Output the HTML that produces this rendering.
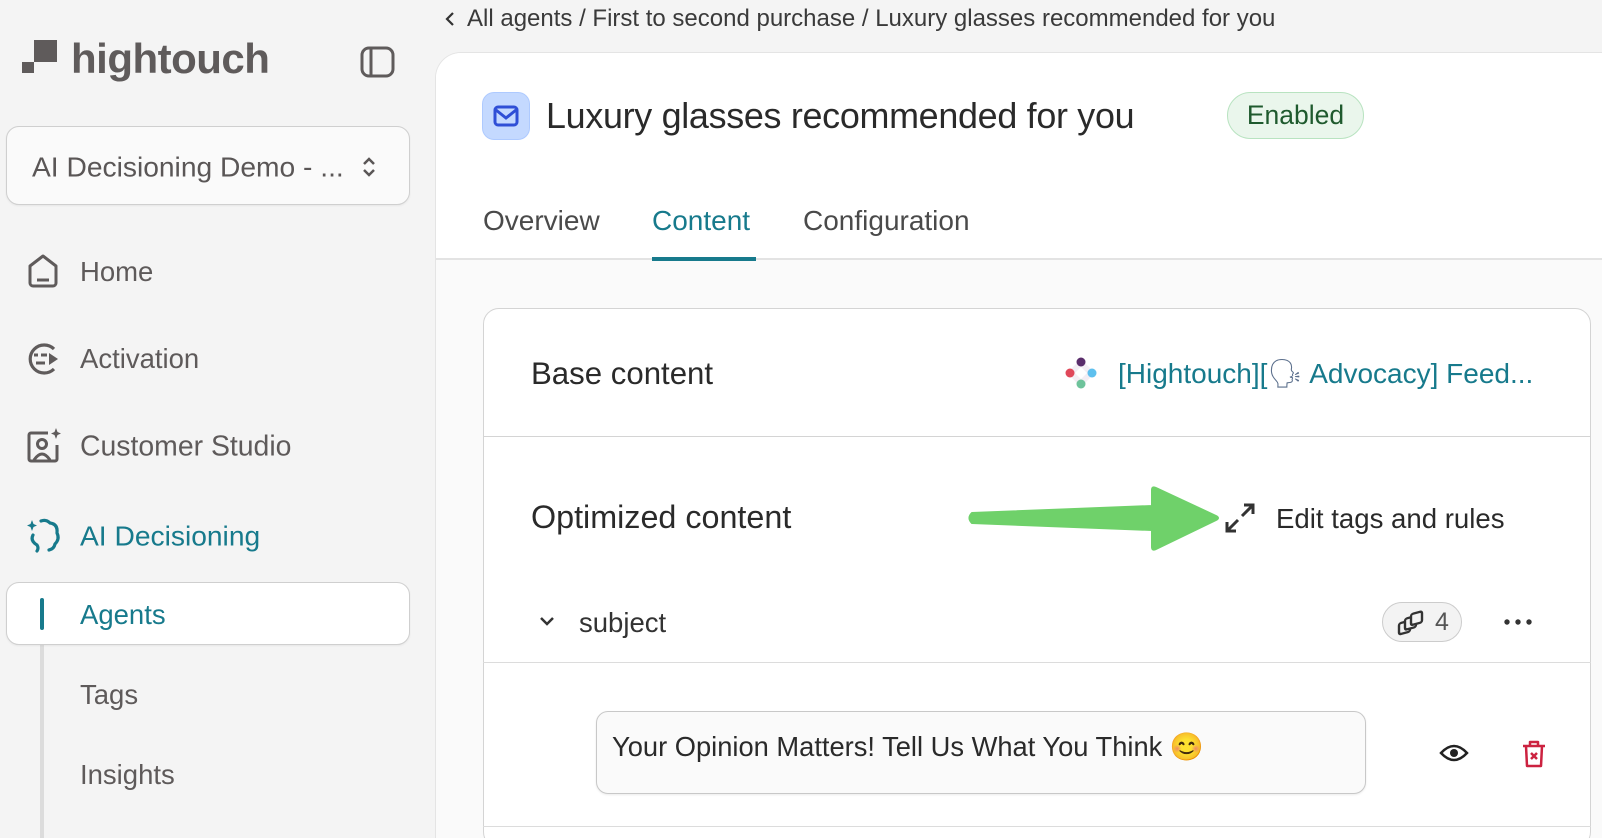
<!DOCTYPE html>
<html><head><meta charset="utf-8"><style>
*{box-sizing:border-box;margin:0;padding:0}
html,body{width:1602px;height:838px;overflow:hidden}
body{background:#f4f4f4;font-family:"Liberation Sans",sans-serif;position:relative;color:#333}
.a{position:absolute;white-space:nowrap}
.nav{font-size:27.5px;color:#5e5a5a;transform:translateY(-50%)}
.tl{color:#177a8c}
</style></head><body>
<!-- sidebar -->
<div class="a" style="left:22px;top:51px;width:12px;height:22px;background:#5f5b5b"></div>
<div class="a" style="left:34px;top:40px;width:23px;height:22px;background:#5f5b5b"></div>
<div class="a" style="left:22px;top:51px;width:12px;height:11px;background:#f4f4f4"></div>
<div class="a" style="left:71px;top:35px;font-size:42px;font-weight:bold;color:#5f5b5b;letter-spacing:-0.5px">hightouch</div>
<svg class="a" style="left:360px;top:46px" width="36" height="32" viewBox="0 0 36 32"><rect x="2" y="2" width="31" height="28" rx="7" fill="none" stroke="#5f5b5b" stroke-width="3"/><line x1="11" y1="3" x2="11" y2="29" stroke="#5f5b5b" stroke-width="3"/></svg>
<div class="a" style="left:6px;top:126px;width:404px;height:79px;border:1px solid #cfcfcf;border-radius:13px;background:#fafafa;box-shadow:0 1px 2px rgba(0,0,0,.06)"></div>
<div class="a nav" style="left:32px;top:167px;color:#5a5656;font-size:28.2px">AI Decisioning Demo - ...</div>
<svg class="a" style="left:360px;top:155px" width="18" height="24" viewBox="0 0 18 24"><path d="M4 9 L9 4 L14 9 M4 15 L9 20 L14 15" fill="none" stroke="#5a5656" stroke-width="2.5"/></svg>
<svg class="a" style="left:27px;top:253px" width="32" height="35" viewBox="0 0 32 35"><path d="M3 13 L16 3 L29 13 V30 a3 3 0 0 1 -3 3 H6 a3 3 0 0 1 -3 -3 Z" fill="none" stroke="#5f5b5b" stroke-width="3" stroke-linejoin="round"/><line x1="10" y1="27" x2="22" y2="27" stroke="#5f5b5b" stroke-width="3"/></svg>
<div class="a nav" style="left:80px;top:272px">Home</div>
<svg class="a" style="left:25px;top:341px" width="38" height="36" viewBox="0 0 38 36"><path d="M29 8 A14 14 0 1 0 29 28" fill="none" stroke="#5f5b5b" stroke-width="3.2"/><path d="M24 12 L33 18 L24 24Z" fill="#5f5b5b"/><line x1="9" y1="14" x2="13" y2="14" stroke="#5f5b5b" stroke-width="3"/><line x1="16" y1="14" x2="22" y2="14" stroke="#5f5b5b" stroke-width="3"/><line x1="11" y1="22" x2="20" y2="22" stroke="#5f5b5b" stroke-width="3"/></svg>
<div class="a nav" style="left:80px;top:359px">Activation</div>
<svg class="a" style="left:26px;top:428px" width="36" height="36" viewBox="0 0 36 36"><path d="M22 5 H5 a2 2 0 0 0 -2 2 V31 a2 2 0 0 0 2 2 H29 a2 2 0 0 0 2 -2 V17" fill="none" stroke="#5f5b5b" stroke-width="3"/><circle cx="16" cy="16" r="4.5" fill="none" stroke="#5f5b5b" stroke-width="3"/><path d="M8 32 Q16 20 24 32" fill="none" stroke="#5f5b5b" stroke-width="3"/><path d="M30 0 L31.5 4 L35 5.5 L31.5 7 L30 11 L28.5 7 L25 5.5 L28.5 4Z" fill="#5f5b5b"/></svg>
<div class="a nav" style="left:80px;top:447px;font-size:28.4px">Customer Studio</div>
<svg class="a" style="left:26px;top:517px" width="36" height="36" viewBox="0 0 36 36"><path d="M15 4 Q20 2 24 6 Q32 7 31 16 Q34 22 29 27 Q28 32 23 33" fill="none" stroke="#177a8c" stroke-width="3.2" stroke-linecap="round"/><path d="M7 18 Q4 24 11 28 Q13 31 11 34" fill="none" stroke="#177a8c" stroke-width="3.2" stroke-linecap="round"/><path d="M6 3 L7.5 7 L11 8.5 L7.5 10 L6 14 L4.5 10 L1 8.5 L4.5 7Z" fill="#177a8c"/></svg>
<div class="a nav tl" style="left:80px;top:536px;font-size:28.2px">AI Decisioning</div>
<div class="a" style="left:40px;top:645px;width:4px;height:210px;background:#dcdcdc"></div>
<div class="a" style="left:6px;top:582px;width:404px;height:63px;border:1px solid #cfcfcf;border-radius:13px;background:#fff;box-shadow:0 1px 2px rgba(0,0,0,.06)"></div>
<div class="a" style="left:40px;top:598px;width:4px;height:32px;background:#177a8c;border-radius:2px"></div>
<div class="a nav tl" style="left:80px;top:615px">Agents</div>
<div class="a nav" style="left:80px;top:695px">Tags</div>
<div class="a nav" style="left:80px;top:775px">Insights</div>
<!-- breadcrumb -->
<svg class="a" style="left:444px;top:10px" width="12" height="18" viewBox="0 0 12 18"><path d="M9 3 L3 9 L9 15" fill="none" stroke="#333" stroke-width="2.2"/></svg>
<div class="a" style="left:467px;top:5px;font-size:24px;color:#3a3a3a">All agents / First to second purchase / Luxury glasses recommended for you</div>
<!-- main panel -->
<div class="a" style="left:435px;top:52px;width:1180px;height:786px;background:#fafafa;border-top-left-radius:26px;border:1px solid #e4e4e4;border-bottom:none;overflow:hidden">
  <div style="height:207px;background:#fff;border-bottom:2px solid #e3e3e3"></div>
</div>
<div class="a" style="left:482px;top:92px;width:48px;height:48px;border-radius:12px;background:#c4d9ff;border:1px solid #aecaff"></div>
<svg class="a" style="left:492px;top:102px" width="28" height="28" viewBox="0 0 28 28"><rect x="3" y="5" width="22" height="18" rx="3" fill="none" stroke="#2f4fd6" stroke-width="3"/><path d="M4 8 L14 16 L24 8" fill="none" stroke="#2f4fd6" stroke-width="3"/></svg>
<div class="a" style="left:546px;top:96px;font-size:35.9px;font-weight:500;color:#2a2a2a;letter-spacing:-0.3px">Luxury glasses recommended for you</div>
<div class="a" style="left:1227px;top:92px;width:137px;height:47px;border-radius:24px;background:#eaf6ec;border:1px solid #b8e3c0;font-size:26.5px;color:#1f5a2e;text-align:center;line-height:45px">Enabled</div>
<div class="a" style="left:483px;top:205px;font-size:28px;color:#4a4a4a">Overview</div>
<div class="a" style="left:652px;top:205px;font-size:28px;color:#177a8c">Content</div>
<div class="a" style="left:803px;top:205px;font-size:28px;color:#4a4a4a">Configuration</div>
<div class="a" style="left:652px;top:257px;width:104px;height:4px;background:#177a8c"></div>
<!-- card -->
<div class="a" style="left:483px;top:308px;width:1108px;height:540px;background:#fff;border:1px solid #d4d4d4;border-radius:16px"></div>
<div class="a" style="left:531px;top:356px;font-size:31.2px;font-weight:500;color:#2a2a2a">Base content</div>
<svg class="a" style="left:1063px;top:355px" width="36" height="36" viewBox="0 0 36 36"><path d="M18 4 L32 18 L18 32 L4 18Z" fill="#f3eef4"/><circle cx="18" cy="7" r="4.5" fill="#5a2d6b"/><circle cx="7" cy="18" r="4.5" fill="#e0485a"/><circle cx="29" cy="18" r="4.5" fill="#5ec0ee"/><circle cx="18" cy="29" r="4.5" fill="#6ec39b"/><path d="M18 12 L24 18 L18 24 L12 18Z" fill="#fff"/></svg>
<div class="a" style="left:1118px;top:357px;font-size:28px;color:#177a8c">[Hightouch][<span style="color:#5b6f8c">🗣</span> Advocacy] Feed...</div>
<div class="a" style="left:483px;top:436px;width:1108px;height:1px;background:#d4d4d4"></div>
<div class="a" style="left:531px;top:499px;font-size:32.3px;font-weight:500;color:#2a2a2a">Optimized content</div>
<svg class="a" style="left:965px;top:480px" width="260" height="80" viewBox="965 480 260 80"><path d="M972 513 L1152 506 L1152 490 Q1152 486 1156 488 L1216 516 Q1220 518 1216 520 L1156 549 Q1152 551 1152 547 L1152 530 L972 523 Q967 518 972 513Z" fill="#6fd16a" stroke="#6fd16a" stroke-width="2" stroke-linejoin="round"/></svg>
<svg class="a" style="left:1224px;top:502px" width="32" height="32" viewBox="0 0 32 32"><path d="M18 14 L29 3 M20 3 H29 V12 M14 18 L3 29 M3 20 V29 H12" fill="none" stroke="#333" stroke-width="3"/></svg>
<div class="a" style="left:1276px;top:503px;font-size:27.6px;color:#2a2a2a">Edit tags and rules</div>
<svg class="a" style="left:538px;top:614px" width="18" height="14" viewBox="0 0 18 14"><path d="M3 4 L9 10 L15 4" fill="none" stroke="#333" stroke-width="2.5"/></svg>
<div class="a" style="left:579px;top:607px;font-size:27.5px;color:#333">subject</div>
<div class="a" style="left:1382px;top:602px;width:80px;height:40px;border-radius:20px;background:#f3f3f3;border:1px solid #ccc"></div>
<svg class="a" style="left:1397px;top:610px" width="28" height="26" viewBox="0 0 28 26"><rect x="2" y="11" width="11" height="11" rx="2" fill="#f3f3f3" stroke="#333" stroke-width="2.4" transform="skewY(-15) translate(0,3)"/><rect x="8" y="8" width="11" height="11" rx="2" fill="#f3f3f3" stroke="#333" stroke-width="2.4" transform="skewY(-15) translate(0,3)"/><rect x="14" y="5" width="11" height="11" rx="2" fill="#f3f3f3" stroke="#333" stroke-width="2.4" transform="skewY(-15) translate(0,3)"/></svg>
<div class="a" style="left:1435px;top:608px;font-size:25px;color:#555">4</div>
<svg class="a" style="left:1503px;top:616px" width="32" height="12" viewBox="0 0 32 12"><circle cx="4" cy="6" r="2.7" fill="#333"/><circle cx="15" cy="6" r="2.7" fill="#333"/><circle cx="26" cy="6" r="2.7" fill="#333"/></svg>
<div class="a" style="left:483px;top:662px;width:1108px;height:1px;background:#dcdcdc"></div>
<div class="a" style="left:596px;top:711px;width:770px;height:83px;border:1px solid #c8c8c8;border-radius:12px;background:#fafafa;box-shadow:0 1px 2px rgba(0,0,0,.08)"></div>
<div class="a" style="left:612px;top:731px;font-size:27.3px;color:#2a2a2a">Your Opinion Matters! Tell Us What You Think <span style="color:#e8a810">😊</span></div>
<svg class="a" style="left:1439px;top:741px" width="30" height="24" viewBox="0 0 30 24"><path d="M2 12 Q15 -2 28 12 Q15 26 2 12Z" fill="none" stroke="#222" stroke-width="2.5"/><circle cx="15" cy="12" r="4" fill="#222"/></svg>
<svg class="a" style="left:1520px;top:739px" width="28" height="30" viewBox="0 0 28 30"><path d="M3 7 H25 M10 7 V3 H18 V7 M6 7 L7 27 H21 L22 7" fill="none" stroke="#cc2240" stroke-width="2.5" stroke-linejoin="round"/><path d="M11 14 L17 20 M17 14 L11 20" stroke="#cc2240" stroke-width="2.5"/></svg>
<div class="a" style="left:483px;top:826px;width:1108px;height:1px;background:#dcdcdc"></div>
</body></html>
